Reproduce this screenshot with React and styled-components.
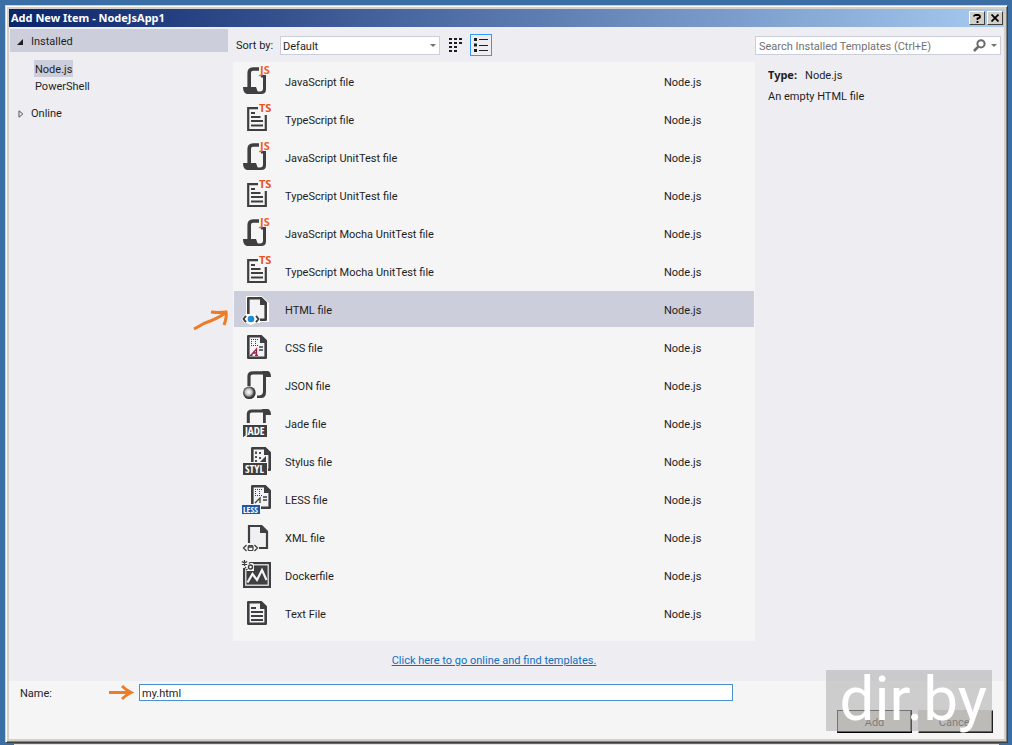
import React, { useState } from 'react';
import styled, { createGlobalStyle } from 'styled-components';

const templates = [
  { name: 'JavaScript file', icon: 'js' },
  { name: 'TypeScript file', icon: 'ts' },
  { name: 'JavaScript UnitTest file', icon: 'js' },
  { name: 'TypeScript UnitTest file', icon: 'ts' },
  { name: 'JavaScript Mocha UnitTest file', icon: 'js' },
  { name: 'TypeScript Mocha UnitTest file', icon: 'ts' },
  { name: 'HTML file', icon: 'html' },
  { name: 'CSS file', icon: 'css' },
  { name: 'JSON file', icon: 'json' },
  { name: 'Jade file', icon: 'jade' },
  { name: 'Stylus file', icon: 'stylus' },
  { name: 'LESS file', icon: 'less' },
  { name: 'XML file', icon: 'xml' },
  { name: 'Dockerfile', icon: 'docker' },
  { name: 'Text File', icon: 'text' }
];

const DARK = '#3f3f41';

// Page outline with a folded corner, 20 x 24
const Page = ({ x = 6, y = 4 }) => (
  <g transform={`translate(${x} ${y})`}>
    <path d="M1.3 1.3H14L18.7 6V22.7H1.3Z" fill="#f3f3f5" stroke={DARK} strokeWidth="2.6" strokeLinejoin="round" />
    <path d="M13 0H14.5L20 5.5V8H13Z" fill={DARK} />
  </g>
);

const Dots = ({ x, y }) => (
  <path
    transform={`translate(${x} ${y})`}
    d="M0 .5H7M0 6.5H7M.5 2V6M4.5 2V6"
    stroke={DARK}
    strokeWidth="1"
    strokeDasharray="1 1"
    fill="none"
  />
);

const drawings = {
  js: (
    <>
      <path d="M18 4H12Q8.2 4 8.2 8V23" fill="none" stroke={DARK} strokeWidth="3.6" />
      <path d="M2 22H15Q16 26 18.5 29H6Q2 28 2 22Z" fill={DARK} />
      <path d="M20 10H25V24.5Q25 29 20 29H16.5V26.4H19Q22 26.4 22 23.5V12.5H20Z" fill={DARK} />
      <IconText x="19" y="9" size="11" color="#e8622c">JS</IconText>
    </>
  ),
  ts: (
    <>
      <path d="M17 5.2H7.2V27H24.8V12" fill="none" stroke={DARK} strokeWidth="2.2" />
      <path d="M10 10H14M10 14H19.5M10 18H22M10 22.5H22" stroke={DARK} strokeWidth="2" />
      <IconText x="18" y="9" size="11" color="#e8521c">TS</IconText>
    </>
  ),
  html: (
    <>
      <path d="M5 3H21L28 10V29H17L10 32L3 29L0 26L5 21Z" fill="#fff" />
      <Page />
      <path d="M5 21H14L19 25V30H3V24Z" fill="#fff" />
      <path d="M5 22.8L2.5 26L5 29.2M15 22.8L17.5 26L15 29.2" fill="none" stroke={DARK} strokeWidth="1.9" />
      <circle cx="10" cy="26" r="3.3" fill="#1a8ed0" />
    </>
  ),
  css: (
    <>
      <Page />
      <Dots x="10" y="8" />
      <path d="M18 16H22M18 19H22" stroke={DARK} strokeWidth="1.4" />
      <path d="M9 24.3H11.5M10 24.3L15.5 18V24.3M12.2 22H15.5M14 24.3H17" fill="none" stroke="#a2203a" strokeWidth="1.3" />
    </>
  ),
  json: (
    <>
      <defs>
        <radialGradient id="ball" cx="0.45" cy="0.45" r="0.55">
          <stop offset="0" stopColor="#fff" />
          <stop offset="0.45" stopColor="#c4c4c4" />
          <stop offset="0.75" stopColor="#4a4a4a" />
          <stop offset="1" stopColor="#1f1f1f" />
        </radialGradient>
      </defs>
      <path d="M8 17V7Q8 3.9 12 3.9H24" fill="none" stroke={DARK} strokeWidth="3.2" />
      <path d="M21 2H27Q30 3 30 8H25V23Q25 29 20 29H16V26.4H18.5Q22 26.4 22 22V6Z" fill={DARK} />
      <circle cx="8.3" cy="23.7" r="6.3" fill="url(#ball)" />
    </>
  ),
  jade: (
    <>
      <path d="M7.3 16V7Q7.3 3.9 11 3.9H24" fill="none" stroke={DARK} strokeWidth="3" />
      <path d="M21 2H27Q30 3 30 8H24.8V16H22V6Z" fill={DARK} />
      <rect x="2" y="18" width="24" height="12" fill={DARK} />
      <IconText x="4" y="28.2" size="11" color="#fff" narrow>JADE</IconText>
    </>
  ),
  stylus: (
    <>
      <Page x={10} y={2} />
      <path d="M15 6.5V9M15 11V13M15 15V17M19 7V9M19 12V14" stroke={DARK} strokeWidth="1.8" />
      <path d="M19 17L25 11V17Z" fill={DARK} />
      <rect x="1" y="17" width="26" height="14" fill="#f5f5f5" />
      <rect x="2" y="18" width="24" height="12" fill={DARK} />
      <IconText x="4" y="28.2" size="11" color="#fff" narrow>STYL</IconText>
    </>
  ),
  less: (
    <>
      <Page x={10} y={2} />
      <Dots x="14" y="6" />
      <path d="M22 14H26M22 17H26" stroke={DARK} strokeWidth="1.3" />
      <path d="M14 20L19 15V20" fill="none" stroke={DARK} strokeWidth="1.3" />
      <rect x="0" y="21" width="20" height="11" fill="#f5f5f5" />
      <rect x="1" y="22" width="18" height="9" fill="#1c5aa6" />
      <IconText x="2" y="30" size="9" color="#fff" narrow>LESS</IconText>
    </>
  ),
  xml: (
    <>
      <path d="M8 22V5H20L26 11V27H18" fill="#f0f0f2" stroke={DARK} strokeWidth="2.2" />
      <path d="M19 4H21L27 10V12H19Z" fill={DARK} />
      <path d="M5.5 24L2.5 27L5.5 30M13.5 24L16.5 27L13.5 30" fill="none" stroke={DARK} strokeWidth="1.3" />
      <rect x="7.2" y="24.7" width="4.8" height="4.8" rx="1" fill="none" stroke={DARK} strokeWidth="1.2" />
      <path d="M7 26H12" stroke={DARK} strokeWidth="1.6" />
    </>
  ),
  docker: (
    <>
      <rect x="2" y="3" width="28" height="26" fill={DARK} />
      <rect x="4.8" y="5.8" width="22.4" height="20.4" fill="none" stroke="#f5f5f5" strokeWidth="1.2" />
      <path d="M6.5 23.5L11.5 15L16 21L21 11L25.5 21" fill="none" stroke="#f5f5f5" strokeWidth="2.2" />
      <path d="M0 0H9V4H13V12H5V9H0Z" fill="#f5f5f5" />
      <path d="M3.5 1V7M.8 2.5L6.2 5.5M6.2 2.5L.8 5.5" stroke={DARK} strokeWidth="1.3" />
      <circle cx="9.5" cy="8" r="2" fill="none" stroke={DARK} strokeWidth="1.4" />
      <path d="M8 3.5L9 4.5M12 4.5L13 3.5M5 11L6.5 10M4 9L5 8" stroke={DARK} strokeWidth="1.4" />
    </>
  ),
  text: (
    <>
      <Page />
      <path d="M10 11H15M10 15H22M10 19H22M10 23H22" stroke={DARK} strokeWidth="2" />
    </>
  )
};

function IconText({ x, y, size, color, narrow, children }) {
  return (
    <text
      x={x}
      y={y}
      fontSize={size}
      fontWeight="700"
      fill={color}
      fontFamily={narrow ? '"Liberation Sans Narrow", "Open Sans Condensed", sans-serif' : '"Open Sans", sans-serif'}
    >
      {children}
    </text>
  );
}

const App = () => {
  const [selected, setSelected] = useState('HTML file');
  const [fileName, setFileName] = useState('my.html');

  return (
    <Desktop>
      <GlobalStyle />
      <Dialog>
        <TitleBar>
          <Title>Add New Item - NodeJsApp1</Title>
          <CaptionButton aria-label="Help">
            <svg width="8" height="9" viewBox="0 0 8 9">
              <path d="M1 2.5Q1 1 3 1H5Q7 1 7 2.7Q7 4 4.5 4.5V6M4.5 7V9" fill="none" stroke="#000" strokeWidth="1.8" />
            </svg>
          </CaptionButton>
          <CaptionButton aria-label="Close">
            <svg width="8" height="8" viewBox="0 0 8 8">
              <path d="M.5 .5L7.5 7.5M7.5 .5L.5 7.5" stroke="#000" strokeWidth="1.7" />
            </svg>
          </CaptionButton>
        </TitleBar>

        <Body>
          <Sidebar>
            <Group active>
              <svg width="8" height="8" viewBox="0 0 8 8"><path d="M7 1V7H1Z" fill="#1e1e1e" /></svg>
              Installed
            </Group>
            <SubList>
              <SubItem active>Node.js</SubItem>
              <SubItem>PowerShell</SubItem>
            </SubList>
            <Group>
              <svg width="8" height="8" viewBox="0 0 8 8"><path d="M3 .8L6.8 4L3 7.2Z" fill="none" stroke="#555" /></svg>
              Online
            </Group>
          </Sidebar>

          <Center>
            <Toolbar>
              <SortLabel htmlFor="sort">Sort by:</SortLabel>
              <SelectBox>
                <Select id="sort" defaultValue="Default">
                  <option>Default</option>
                  <option>Name Ascending</option>
                  <option>Name Descending</option>
                </Select>
                <Caret />
              </SelectBox>
              <ViewButton aria-label="Small icons">
                <svg width="14" height="14" viewBox="0 0 14 14">
                  <path d="M1 1H14M1 5H14M1 9H9M1 13H9" stroke="#1e1e1e" strokeWidth="2" strokeDasharray="3 2" />
                </svg>
              </ViewButton>
              <ViewButton active aria-label="Medium icons">
                <svg width="14" height="14" viewBox="0 0 14 14">
                  <path d="M0 1.5H3M0 7H3M0 12.5H3" stroke="#1e1e1e" strokeWidth="3" />
                  <path d="M5 1.5H14M5 7.5H14M5 12.5H14" stroke="#1e1e1e" strokeWidth="1" />
                </svg>
              </ViewButton>
            </Toolbar>
            <List>
              {templates.map(item => (
                <Row
                  key={item.name}
                  active={item.name === selected}
                  aria-pressed={item.name === selected}
                  onClick={() => setSelected(item.name)}
                >
                  <Icon width="32" height="32" viewBox="0 0 32 32">{drawings[item.icon]}</Icon>
                  <RowText>{item.name}</RowText>
                  <RowText>Node.js</RowText>
                  {item.icon === 'html' && (
                    <RowArrow width="36" height="22" viewBox="0 0 36 22">
                      <path d="M1 20L12 14Q24 10 32 4M18 3Q26 4 33 3Q34 8 31 16" />
                    </RowArrow>
                  )}
                </Row>
              ))}
            </List>
            <OnlineLink>
              <a href="#online">Click here to go online and find templates.</a>
            </OnlineLink>
          </Center>

          <Details>
            <SearchBox>
              <SearchInput aria-label="Search templates" placeholder="Search Installed Templates (Ctrl+E)" />
              <svg width="13" height="13" viewBox="0 0 13 13">
                <circle cx="8" cy="4.8" r="3.6" fill="none" stroke="#6a6a6a" strokeWidth="2" />
                <path d="M5.3 7.6L1 12" stroke="#6a6a6a" strokeWidth="2.6" />
              </svg>
              <Caret />
            </SearchBox>
            <Description>
              <p><b>Type:</b>Node.js</p>
              <p>An empty HTML file</p>
            </Description>
          </Details>
        </Body>

        <Footer>
          <NameRow>
            <label htmlFor="file-name">Name:</label>
            <NameArrow width="26" height="18" viewBox="0 0 26 18">
              <path d="M1 8.5H23M14 2Q18 6 23 8.5Q18 11 14 15" />
            </NameArrow>
            <NameInput id="file-name" value={fileName} onChange={e => setFileName(e.target.value)} />
          </NameRow>
          <Buttons>
            <PushButton primary>Add</PushButton>
            <PushButton>Cancel</PushButton>
          </Buttons>
          <Watermark>dir.by</Watermark>
        </Footer>
      </Dialog>
      <Behind />
    </Desktop>
  );
};

const GlobalStyle = createGlobalStyle`
  * {
    box-sizing: border-box;
  }

  body {
    margin: 0;
    background: #3b6ea5;
    color: #1e1e1e;
    font-family: Tahoma, Roboto, sans-serif;
    font-size: 11px;
    line-height: 17px;
  }

  button, input, select {
    font: inherit;
    color: inherit;
    border-radius: 0;
    outline: none;
  }

  svg {
    display: block;
    flex: none;
  }

  p {
    margin: 0;
  }
`;

const Desktop = styled.div`
  display: flex;
  flex-direction: column;
  min-height: 100vh;
  padding: 5px 4px 0 5px;
`;

const Dialog = styled.main`
  display: flex;
  flex-direction: column;
  flex: 1;
  padding: 2px;
  background: #d4d0c8;
  border: 1px solid;
  border-color: #d4d0c8 #404040 #404040 #d4d0c8;
  box-shadow: inset 1px 1px #fff, inset -1px -1px #808080;
`;

const Behind = styled.div`
  height: 2px;
  margin: 1px 9px 0;
  background: #e4e4e6;
`;

const TitleBar = styled.header`
  display: flex;
  align-items: center;
  height: 18px;
  margin: 1px 1px 0;
  padding: 0 1px 0 2px;
  gap: 2px;
  background: linear-gradient(to right, #0a246a, #a6caf0);
`;

const Title = styled.h1`
  flex: 1;
  margin: 0;
  padding-bottom: 2px;
  color: #fff;
  font-family: Tahoma, "Noto Sans", sans-serif;
  font-size: 11px;
  font-weight: 700;
`;

const CaptionButton = styled.button`
  display: flex;
  align-items: center;
  justify-content: center;
  width: 16px;
  height: 14px;
  padding: 0;
  background: #d4d0c8;
  border: 1px solid;
  border-color: #fff #404040 #404040 #fff;
`;

const Body = styled.div`
  display: flex;
  flex: 1;
  margin: 0 1px;
  padding-top: 1px;
  background: #eeeef2;
`;

const Sidebar = styled.nav`
  width: 219px;
  padding: 1px 0 0 1px;
`;

const Group = styled.div`
  display: flex;
  align-items: center;
  height: 23px;
  padding: 2px 0 0 6px;
  gap: 7px;
  background: ${props => (props.active ? '#cccedb' : 'transparent')};
`;

const SubList = styled.div`
  display: flex;
  flex-direction: column;
  align-items: flex-start;
  padding: 8px 0 7px 24px;
`;

const SubItem = styled.button`
  height: 17px;
  padding: 2px 1px 0;
  border: 0;
  line-height: 15px;
  background: ${props => (props.active ? '#cccedb' : 'transparent')};
`;

const Center = styled.section`
  display: flex;
  flex-direction: column;
  flex: 1;
  padding-left: 5px;
`;

const Toolbar = styled.div`
  display: flex;
  align-items: center;
  height: 34px;
  padding-left: 3px;
  gap: 4px;
`;

const SortLabel = styled.label`
  width: 40px;
  white-space: nowrap;
`;

const SelectBox = styled.div`
  display: flex;
  align-items: center;
  width: 160px;
  height: 19px;
  padding-right: 3px;
  background: #fff;
  border: 1px solid #cccedb;
`;

const Select = styled.select`
  flex: 1;
  height: 17px;
  padding: 2px 2px 0;
  border: 0;
  line-height: 15px;
  background: transparent;
  appearance: none;
`;

const Caret = styled.span`
  border: 3px solid transparent;
  border-top-color: #717171;
  border-bottom: 0;
`;

const ViewButton = styled.button`
  display: flex;
  align-items: center;
  justify-content: center;
  width: 22px;
  height: 22px;
  padding: 0;
  background: transparent;
  border: 1px solid ${props => (props.active ? '#3399ff' : 'transparent')};
`;

const List = styled.div`
  display: flex;
  flex-direction: column;
  gap: 2px;
  padding: 1px 1px 10px;
  background: #f5f5f5;
`;

const Row = styled.button`
  position: relative;
  display: grid;
  grid-template-columns: 32px 1fr 90px;
  align-items: center;
  column-gap: 12px;
  height: 36px;
  padding: 0 0 0 7px;
  border: 0;
  text-align: left;
  background: ${props => (props.active ? '#cccedb' : 'transparent')};
`;

const RowText = styled.span`
  padding-top: 2px;
`;

const Icon = styled.svg`
  overflow: visible;
`;

const Arrow = styled.svg`
  fill: none;
  stroke: #ee7b26;
  stroke-width: 3;
`;

const RowArrow = styled(Arrow)`
  position: absolute;
  top: 18px;
  left: -41px;
`;

const OnlineLink = styled.div`
  display: flex;
  align-items: center;
  justify-content: center;
  height: 40px;
  padding-bottom: 1px;

  a {
    color: #0e70c0;
  }
`;

const Details = styled.aside`
  width: 249px;
`;

const SearchBox = styled.div`
  display: flex;
  align-items: center;
  height: 19px;
  margin: 8px 3px 0 0;
  padding-right: 3px;
  gap: 5px;
  background: #fff;
  border: 1px solid #cccedb;
`;

const SearchInput = styled.input`
  flex: 1;
  min-width: 0;
  height: 17px;
  padding: 2px 3px 0;
  border: 0;
  background: transparent;

  &::placeholder {
    color: #717171;
    opacity: 1;
  }
`;

const Description = styled.div`
  display: flex;
  flex-direction: column;
  gap: 4px;
  padding: 11px 13px;

  b {
    margin-right: 8px;
    font-family: Tahoma, "Noto Sans", sans-serif;
  }
`;

const Footer = styled.footer`
  position: relative;
  display: flex;
  flex-direction: column;
  gap: 9px;
  margin: 0 1px 1px;
  padding: 3px 11px 6px;
  background: #f5f5f5;
`;

const NameRow = styled.div`
  display: flex;
  align-items: center;
  height: 17px;
  padding-right: 260px;

  label {
    flex: none;
    width: 88px;
    padding-top: 2px;
  }
`;

const NameArrow = styled(Arrow)`
  margin-right: 5px;
`;

const NameInput = styled.input`
  flex: 1;
  min-width: 0;
  height: 17px;
  padding: 2px 2px 0;
  background: #fff;
  border: 1px solid #4a90d9;
`;

const Buttons = styled.div`
  display: flex;
  justify-content: flex-end;
  gap: 6px;
`;

const PushButton = styled.button`
  width: 75px;
  height: 23px;
  padding: 2px 0 0;
  color: #555;
  background: #d4d0c8;
  border: 1px solid;
  border-color: ${props => (props.primary ? '#444 #000 #000 #444' : '#d4d0c8 #202020 #202020 #d4d0c8')};
  box-shadow: inset -1px -1px #606060;
`;

const Watermark = styled.div`
  position: absolute;
  right: 12px;
  bottom: 8px;
  width: 166px;
  height: 61px;
  padding-right: 5px;
  color: #fff;
  font-family: Roboto, sans-serif;
  font-size: 62px;
  line-height: 58px;
  text-align: right;
  background: rgba(165, 165, 165, 0.5);
  pointer-events: none;
`;

export default App;
